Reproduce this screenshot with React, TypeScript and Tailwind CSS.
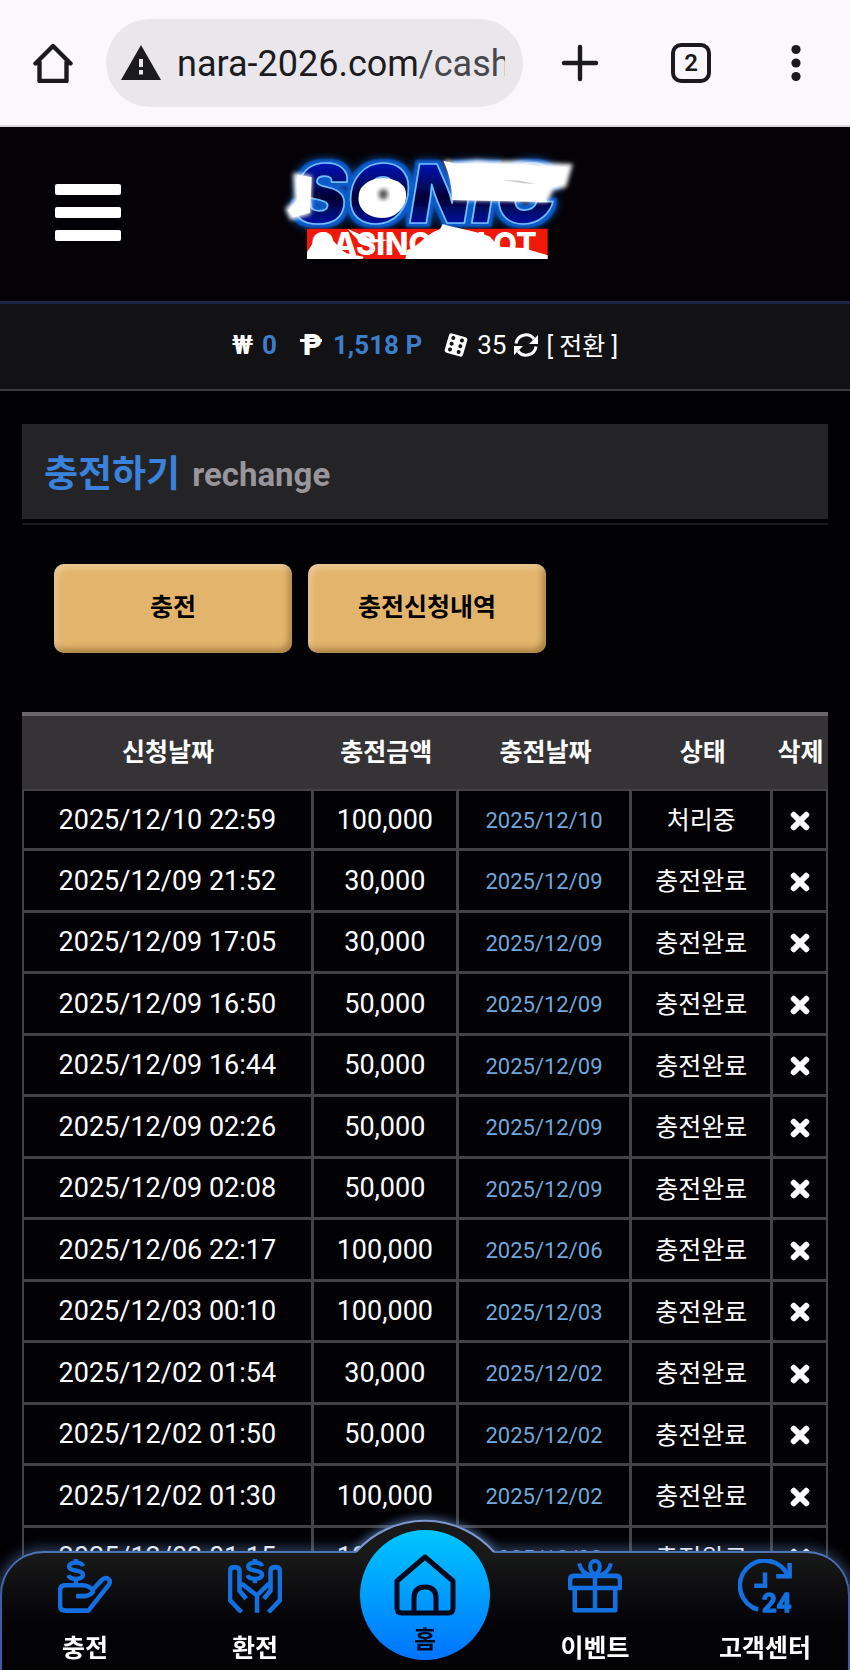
import React from "react";
import { FaTimes } from "react-icons/fa";

type Row = { requested: string; amount: string; charged: string; status: string };

const done = "충전완료";
const rows: Row[] = [
  { requested: "2025/12/10 22:59", amount: "100,000", charged: "2025/12/10", status: "처리중" },
  { requested: "2025/12/09 21:52", amount: "30,000", charged: "2025/12/09", status: done },
  { requested: "2025/12/09 17:05", amount: "30,000", charged: "2025/12/09", status: done },
  { requested: "2025/12/09 16:50", amount: "50,000", charged: "2025/12/09", status: done },
  { requested: "2025/12/09 16:44", amount: "50,000", charged: "2025/12/09", status: done },
  { requested: "2025/12/09 02:26", amount: "50,000", charged: "2025/12/09", status: done },
  { requested: "2025/12/09 02:08", amount: "50,000", charged: "2025/12/09", status: done },
  { requested: "2025/12/06 22:17", amount: "100,000", charged: "2025/12/06", status: done },
  { requested: "2025/12/03 00:10", amount: "100,000", charged: "2025/12/03", status: done },
  { requested: "2025/12/02 01:54", amount: "30,000", charged: "2025/12/02", status: done },
  { requested: "2025/12/02 01:50", amount: "50,000", charged: "2025/12/02", status: done },
  { requested: "2025/12/02 01:30", amount: "100,000", charged: "2025/12/02", status: done },
  { requested: "2025/12/02 01:15", amount: "100,000", charged: "2025/12/02", status: done },
];

function BrowserBar() {
  return (
    <div className="flex h-[127px] items-center border-b-2 border-[#d9dadd] bg-[#faf8fd] pr-[34px] pl-[33px] text-[#1b1b1f]">
      <button type="button" aria-label="Home" className="shrink-0">
        <svg className="size-10" viewBox="0 0 40 40" fill="none" stroke="currentColor" strokeWidth="4.400" strokeLinejoin="round" strokeLinecap="round">
          <path d="M2.500 20.500 20 3l17.500 17.500M6.500 19V38h27V19" />
        </svg>
      </button>
      <div className="ml-[33px] flex h-[88px] min-w-0 flex-1 items-center rounded-full bg-[#e9e7ec] pr-[18px] pl-[15px]">
        <svg className="h-[35px] w-10 shrink-0" viewBox="0 0 40 35" aria-hidden="true">
          <path d="M20 0 40 35H0z" fill="#1b1b1f" />
          <path d="M18 14h4v8h-4zM18 25h4v4.500h-4z" fill="#e9e7ec" />
        </svg>
        <span className="ml-4 min-w-0 flex-1 overflow-hidden pt-[3px] text-[36px] leading-[44px] whitespace-nowrap">
          nara-2026.com<span className="text-[#47464b]">/cash</span>
        </span>
      </div>
      <button type="button" aria-label="New tab" className="ml-[37px] shrink-0">
        <svg className="size-10" viewBox="0 0 40 40" stroke="currentColor" strokeWidth="4.400" strokeLinecap="round">
          <path d="M20 4v32M4 20h32" />
        </svg>
      </button>
      <button type="button" aria-label="Tabs" className="ml-[71px] flex size-10 shrink-0 items-center justify-center rounded-[10px] border-4 border-[#1b1b1f] text-[24px] leading-none font-semibold">
        2
      </button>
      <button type="button" aria-label="Menu" className="ml-[65px] shrink-0">
        <svg className="size-10" viewBox="0 0 40 40" fill="currentColor">
          <circle cx="20" cy="6.500" r="4.600" />
          <circle cx="20" cy="20" r="4.600" />
          <circle cx="20" cy="33.500" r="4.600" />
        </svg>
      </button>
    </div>
  );
}

function Logo() {
  return (
    <svg className="h-[130px] w-[340px]" viewBox="0 0 1020 390" role="img" aria-label="Sonic Casino Slot">
      <defs>
        <linearGradient id="ink" x1="0" y1="0" x2="0" y2="1">
          <stop offset="0.2" stopColor="#0614b4" />
          <stop offset="0.55" stopColor="#010232" />
          <stop offset="0.85" stopColor="#0512b0" />
        </linearGradient>
        <filter id="rim" x="-10%" y="-20%" width="120%" height="140%">
          <feMorphology in="SourceAlpha" operator="dilate" radius="9" result="fat" />
          <feGaussianBlur in="fat" stdDeviation="3" result="fatSoft" />
          <feFlood floodColor="#0d5ccb" result="blue" />
          <feComposite in="blue" in2="fatSoft" operator="in" result="ring" />
          <feGaussianBlur in="fat" stdDeviation="13" result="far" />
          <feFlood floodColor="#1a4fae" result="haze" />
          <feComposite in="haze" in2="far" operator="in" result="halo" />
          <feMerge>
            <feMergeNode in="halo" />
            <feMergeNode in="ring" />
            <feMergeNode in="SourceGraphic" />
          </feMerge>
        </filter>
        <filter id="edge" x="-20%" y="-20%" width="140%" height="140%">
          <feGaussianBlur stdDeviation="7" />
        </filter>
      </defs>
      <text
        x="100"
        y="248"
        fill="url(#ink)"
        stroke="#6dbdff"
        strokeWidth="5"
        strokeLinejoin="round"
        fontFamily="Inter, sans-serif"
        fontWeight="900"
        fontStyle="italic"
        fontSize="242"
        filter="url(#rim)"
      >
        SONIC
      </text>
      <g fill="#fff">
        <path d="M100 98 155 108 152 222 92 240 76 206 104 180z" filter="url(#edge)" />
        <path d="M112 104 155 112 150 218 100 232 84 212 112 180z" />
        <path d="M300 150C322 108 398 100 432 140 452 176 424 234 366 234 312 232 284 196 300 150z" />
        <path d="M552 60 590 66 650 60 700 64 780 62 860 70 938 72 918 142 880 150 862 186 576 180C586 140 570 100 552 60z" filter="url(#edge)" />
        <path d="M550 62C570 68 580 70 600 72L780 74 920 82 900 136C860 142 846 160 862 186L576 180C576 140 568 100 550 62z" />
      </g>
      <ellipse cx="370" cy="163" rx="14" ry="16" fill="#555" filter="url(#edge)" />
      <path d="M726 120 780 122 828 132 790 130z" fill="#aaa" opacity=".6" />
      <path d="M141 266H863V357H141z" fill="#f01808" />
      <g fill="#fff" fontFamily="Inter, sans-serif" fontWeight="800" fontSize="92">
        <text x="154" y="345">CASINO</text>
        <text x="590" y="345">SLOT</text>
      </g>
      <path d="M141 336C160 310 170 284 200 282 230 310 236 326 260 340L310 350 308 357H141zM262 266 330 296 388 300 340 308 294 300zM436 357 442 330C480 320 496 280 540 268L548 252C600 268 660 276 690 290L716 320 790 324 863 346V357z" fill="#fff" />
    </svg>
  );
}

function SiteHeader() {
  return (
    <header className="grid h-[177px] grid-cols-[1fr_auto_1fr] items-start border-b-[3px] border-[#1c2747] bg-[#040206]">
      <button type="button" aria-label="메뉴" className="mt-[57px] ml-[55px] flex w-[66px] flex-col gap-3">
        <span className="h-[11px] rounded-xs bg-white" />
        <span className="h-[11px] rounded-xs bg-white" />
        <span className="h-[11px] rounded-xs bg-white" />
      </button>
      <a href="#home" className="mt-[13px] ml-[10px]">
        <Logo />
      </a>
      <span />
    </header>
  );
}

function BalanceBar() {
  return (
    <div className="flex h-[87px] items-center justify-center border-b-2 border-[#3c3b3e] bg-[#121114] pb-1 text-[26px] leading-8 whitespace-nowrap text-white">
      <span className="font-bold">₩</span>
      <b className="ml-[9px] text-[#3d7ecb]">0</b>
      <svg className="ml-[22px] h-8 w-6" viewBox="0 0 24 32" role="img" aria-label="포인트">
        <text x="4" y="26" fill="#fff" fontFamily="Roboto, sans-serif" fontWeight="900" fontSize="29">P</text>
        <path d="M1 10h22v3H1z" fill="#fff" />
      </svg>
      <b className="ml-[10px] text-[#3d7ecb]">1,518 P</b>
      <svg className="ml-[22px] size-6" viewBox="0 0 24 24" aria-hidden="true">
        <g transform="rotate(16 12 12)">
          <rect x="2.500" y="2" width="19" height="20" rx="2.500" fill="#fff" />
          <g fill="#121114">
            <circle cx="7.500" cy="6" r="2" />
            <circle cx="7.500" cy="12" r="2" />
            <circle cx="7.500" cy="18" r="2" />
            <circle cx="16.500" cy="6" r="2" />
            <circle cx="16.500" cy="12" r="2" />
            <circle cx="16.500" cy="18" r="2" />
          </g>
        </g>
      </svg>
      <span className="ml-[9px]">35</span>
      <button type="button" className="ml-2 flex items-center">
        <svg className="size-6" viewBox="0 0 24 24" fill="none" stroke="#fff" strokeWidth="3" aria-hidden="true">
          <path d="M2 10.500A10 10 0 0 1 20 6M22 13.500A10 10 0 0 1 4 18" />
          <path d="M24 2v9h-9zM0 22v-9h9z" fill="#fff" stroke="none" />
        </svg>
        <span className="ml-2 pt-1 text-[25px]">[ 전환 ]</span>
      </button>
    </div>
  );
}

function GoldButton({ children }: { children: React.ReactNode }) {
  return (
    <button
      type="button"
      className="h-[89px] w-[238px] rounded-[10px] bg-[#e3b56c] pb-[2px] text-[25px] font-bold text-black shadow-[inset_3px_4px_6px_rgba(255,255,255,0.3),inset_-3px_-4px_6px_rgba(90,60,10,0.45)]"
    >
      {children}
    </button>
  );
}

function HistoryTable() {
  return (
    <table className="mt-[59px] w-full table-fixed border-separate border-spacing-0 text-center text-white">
      <colgroup>
        <col className="w-[36.200%]" />
        <col className="w-[18%]" />
        <col className="w-[21.500%]" />
        <col className="w-[17.500%]" />
        <col className="w-[6.800%]" />
      </colgroup>
      <thead>
        <tr className="h-[77px] bg-[#353336] text-[25px] font-bold whitespace-nowrap">
          {["신청날짜", "충전금액", "충전날짜", "상태", "삭제"].map((h) => (
            <th key={h} scope="col" className="border-t-4 border-[#68666a] p-0">
              {h}
            </th>
          ))}
        </tr>
      </thead>
      <tbody className="[&_td]:border-r-[3px] [&_td]:border-b-[3px] [&_td]:border-[#434245] [&_td]:px-0 [&_td:first-child]:border-l-2 [&_td:last-child]:border-r-2 [&_tr:first-child_td]:border-t-2">
        {rows.map((r) => (
          <tr key={r.requested} className="odd:h-[61px] even:h-[62px] first:h-[62px]!">
            <td className="py-0 text-[27px] leading-8">{r.requested}</td>
            <td className="py-0 text-[27px] leading-8">{r.amount}</td>
            <td className="pt-[3px] pb-0 text-[22px] leading-8 text-[#6fa8dc]">{r.charged}</td>
            <td className="pt-[3px] pb-0 text-[25px] leading-8">{r.status}</td>
            <td className="pt-[2px] pb-0">
              <button type="button" aria-label={`${r.requested} 삭제`} className="block w-full">
                <FaTimes className="mx-auto text-[26px]" stroke="white" strokeWidth="20" />
              </button>
            </td>
          </tr>
        ))}
      </tbody>
    </table>
  );
}

const Dollar = ({ x }: { x: number }) => (
  <g transform={`translate(${x} 0)`}>
    <path d="M21 21C17 7-20 7-20 22-20 38 21 31 21 47 21 63-18 62-22 48" strokeWidth="13" />
    <path d="M0 0v12M0 58v14" strokeWidth="13" />
  </g>
);

const icons = {
  deposit: (
    <>
      <Dollar x={53} />
      <path d="M54 110H80Q98 108 106 94M104 94Q92 78 72 78H22Q6 78 6 94V138Q6 153 22 153H90L151 76Q158 62 146 57 138 54 130 62L100 94" />
    </>
  ),
  withdraw: (
    <>
      <Dollar x={80} />
      <path d="M40 158 6 122V36Q6 24 20 24 34 24 34 36V94L54 118M36 76H44L86 108V159M120 158 154 122V36Q154 24 140 24 126 24 126 36V94L106 118M124 76H118L86 108" />
    </>
  ),
  event: (
    <>
      <path d="M20 86H140V152H20zM6 86V62Q6 50 18 50H142Q154 50 154 62V86zM80 50V152" />
      <path d="M80 46C60 34 62 6 80 6S100 34 80 46M33 13Q38 42 72 50M127 13Q122 42 88 50" strokeWidth="12" />
    </>
  ),
  support: (
    <>
      <path d="M60 150A74 74 0 1 1 148 50" />
      <path d="M80 40V79H48M153 12V51H113" strokeLinejoin="miter" />
      <text x="71" y="158" fill="currentColor" stroke="currentColor" strokeWidth="4" fontFamily="Roboto, sans-serif" fontWeight="700" fontSize="76">24</text>
    </>
  ),
};

function NavItem({ label, icon }: { label: string; icon: keyof typeof icons }) {
  return (
    <a href={`#${icon}`} className="flex flex-col items-center pt-2 text-[25px] leading-8 font-bold whitespace-nowrap text-white">
      <svg className="size-[54px] text-[#1470e0]" viewBox="0 0 160 160" fill="none" stroke="currentColor" strokeWidth="13.500" strokeLinejoin="round" aria-hidden="true">
        {icons[icon]}
      </svg>
      <span className="mt-5">{label}</span>
    </a>
  );
}

function BottomNav() {
  return (
    <nav className="fixed inset-x-0 bottom-0 grid h-[119px] grid-cols-5 rounded-t-[44px] bg-linear-to-b from-[#1a1b1a] to-[#030205] to-70% shadow-[0_0_14px_2px_rgba(105,150,215,0.5),inset_0_2px_0_0_#4f74b5,inset_2px_0_0_0_#3a5f9c,inset_-2px_0_0_0_#3a5f9c]">
      <NavItem label="충전" icon="deposit" />
      <NavItem label="환전" icon="withdraw" />
      <div className="relative">
        <svg className="absolute -top-[50px] left-1/2 h-[58px] w-[200px] -translate-x-1/2" viewBox="0 0 200 58" aria-hidden="true">
          <defs>
            <filter id="glow" x="-20%" y="-50%" width="140%" height="200%">
              <feGaussianBlur stdDeviation="5" />
            </filter>
            <clipPath id="above">
              <path d="M0 0H200V50H0z" />
            </clipPath>
          </defs>
          <g clipPath="url(#above)">
            <path d="M31 51A92 92 0 0 1 169 51" fill="#6996d7" stroke="#6996d7" strokeWidth="5" opacity=".7" filter="url(#glow)" />
          </g>
          <path d="M31 51A92 92 0 0 1 169 51V58H31z" fill="#181918" />
          <path d="M31 51A92 92 0 0 1 169 51" fill="none" stroke="#7b97cc" strokeWidth="2" />
        </svg>
        <a
          href="#home"
          className="absolute -top-[21px] left-1/2 flex size-[130px] -translate-x-1/2 flex-col items-center rounded-full bg-linear-to-b from-[#00c6ff] to-[#0072ff] pt-6 text-[24px] leading-8 font-bold text-[#04081c]"
        >
          <svg className="h-[62px] w-[62px]" viewBox="0 0 62 62" fill="none" stroke="currentColor" strokeWidth="5" strokeLinejoin="round" aria-hidden="true">
            <path d="M31 3 59 27V54Q59 59 54 59H8Q3 59 3 54V27zM20 59V44Q20 33 31 33T42 44V59" />
          </svg>
          <span className="mt-2">홈</span>
        </a>
      </div>
      <NavItem label="이벤트" icon="event" />
      <NavItem label="고객센터" icon="support" />
    </nav>
  );
}

export default function App() {
  return (
    <div className="min-h-screen bg-[#020104] font-[Roboto,'Noto_Sans_CJK_KR',sans-serif]">
      <BrowserBar />
      <SiteHeader />
      <BalanceBar />
      <main className="px-[22px] pt-[33px]">
        <h1 className="flex h-[95px] items-center bg-[#242326] pt-[6px] pl-[22px] text-[37px] font-bold text-[#3b82dc]">
          충전하기<span className="ml-3 text-[33px] text-[#98969a]">rechange</span>
        </h1>
        <div className="mt-1 h-[2px] bg-[#1b1a1c]" />
        <div className="mt-[39px] flex gap-4 pl-8">
          <GoldButton>충전</GoldButton>
          <GoldButton>충전신청내역</GoldButton>
        </div>
        <HistoryTable />
      </main>
      <BottomNav />
    </div>
  );
}
